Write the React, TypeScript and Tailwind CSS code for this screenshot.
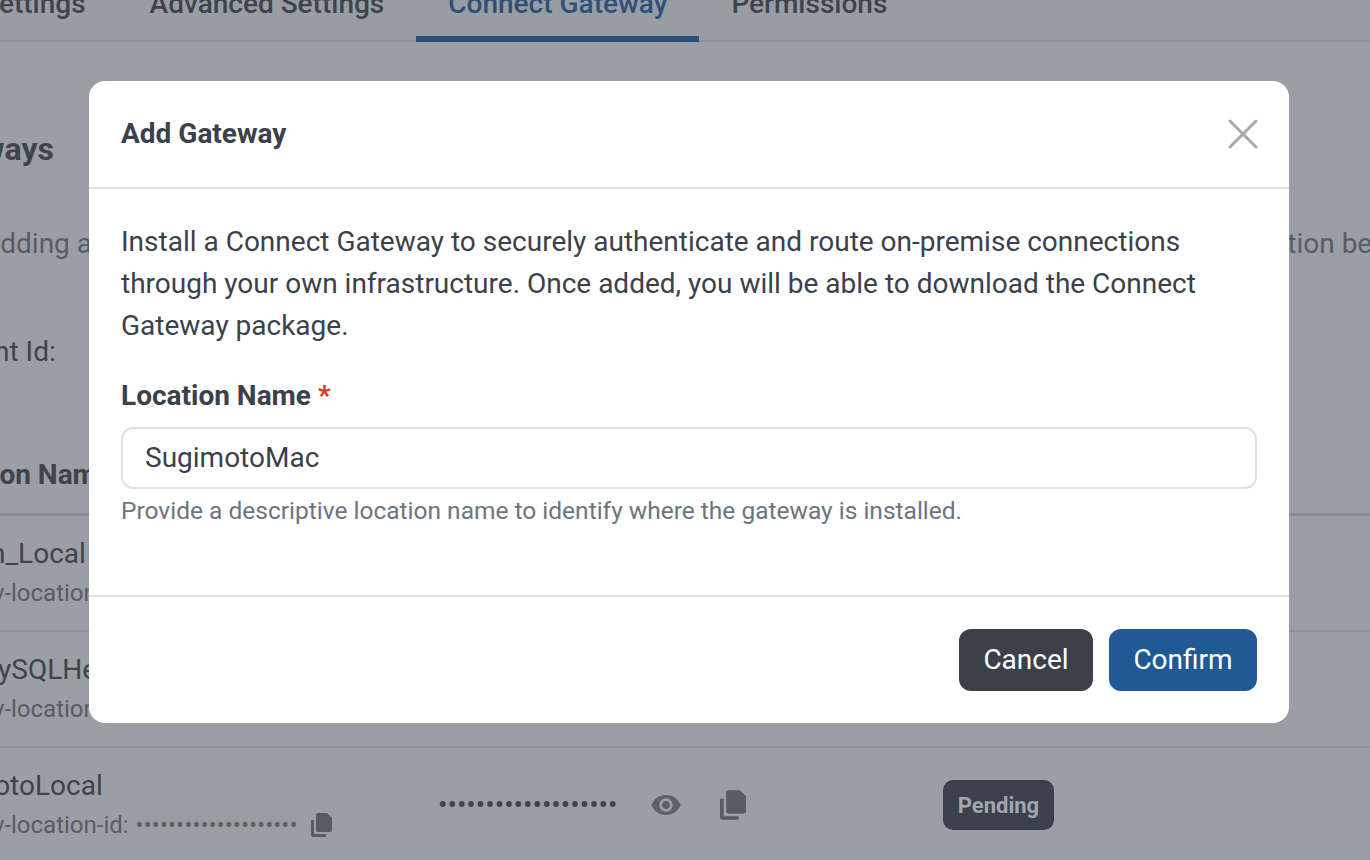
import { MdRemoveRedEye } from 'react-icons/md';

const DOTS = '•'.repeat(19);
const ID_DOTS = '•'.repeat(20);

function CopyIcon({ className }: { className: string }) {
  return (
    <svg className={className} viewBox="0 0 21 24" fill="currentColor">
      <path d="M7 0h9l5 5v12a2 2 0 0 1-2 2H7a2 2 0 0 1-2-2V2a2 2 0 0 1 2-2z" />
      <path d="M0 7h3v14h12v3H2a2 2 0 0 1-2-2z" />
    </svg>
  );
}

function LocationRow({ name, last }: { name: string; last?: boolean }) {
  return (
    <div className={`h-[116px] pt-[20px] ${last ? '' : 'border-b-2 border-[#8d9098]'}`}>
      <div className="flex items-start">
        <div className="w-[524px] shrink-0">
          <div className="ml-[1px] text-[28px] leading-[36px] text-[#3d444e] whitespace-nowrap">{name}</div>
          <div className="ml-[1px] mt-[3px] flex items-center text-[24px] leading-[36px] text-[#565d67] whitespace-nowrap">
            <span>gateway-location-id:</span>
            <span className="ml-[7px] text-[#5a6069]">{ID_DOTS}</span>
            <CopyIcon className="ml-[13px] w-[21px] h-[24px] text-[#585b63]" />
          </div>
        </div>
        {last && (
          <div className="mt-[12px] flex items-center">
            <span className="-mt-[1px] w-[178px] h-[36px] leading-[36px] text-[28px] text-[#3d444e] whitespace-nowrap overflow-hidden">{DOTS}</span>
            <MdRemoveRedEye className="ml-[34px] text-[#5e6169]" size={32} />
            <CopyIcon className="ml-[38px] w-[26px] h-[30px] text-[#585b63]" />
            <span className="ml-[197px] w-[111px] h-[50px] flex items-center justify-center rounded-[10px] bg-[#3a414c] text-[22px] font-bold text-[#a3a6ad]">
              Pending
            </span>
          </div>
        )}
      </div>
    </div>
  );
}

export default function App() {
  return (
    <div
      className="relative w-[1370px] h-[860px] overflow-hidden bg-[#9b9ea5]"
      style={{ fontFamily: 'Roboto, sans-serif' }}
    >
      {/* page behind the dialog */}
      <div className="h-[42px] border-b-2 border-[#8d9098] flex items-end bg-[#989da4]">
        <div className="flex -ml-[50px] text-[28px] font-medium text-[#3d444e]">
          {['Settings', 'Advanced Settings', 'Connect Gateway', 'Permissions'].map(tab => (
            <div
              key={tab}
              className={`h-[42px] -mb-[2px] px-[32px] leading-[8px] whitespace-nowrap ${
                tab === 'Connect Gateway' ? 'border-b-[6px] border-[#2b5078] text-[#2d5178]' : ''
              }`}
            >
              {tab}
            </div>
          ))}
        </div>
      </div>

      <div className="-ml-[86px]">
        <h2 className="mt-[87px] text-[32px] leading-[40px] font-bold text-[#3d444e]">Gateways</h2>
        <p className="mt-[57px] flex justify-between w-[1508px] text-[28px] leading-[36px] text-[#565d67] whitespace-nowrap">
          <span className="ml-[68px]">Adding a</span>
          <span>location before</span>
        </p>
        <div className="mt-[72px] ml-[1px] text-[28px] leading-[36px] text-[#3d444e] whitespace-nowrap">Account Id:</div>

        <div className="mt-[87px] pl-[8px] pb-[20px] border-b-[3px] border-[#858a93] text-[28px] leading-[36px] font-bold text-[#3d444e] whitespace-nowrap">
          Location Name
        </div>
        <LocationRow name="Nathan_Local" />
        <LocationRow name="ProdMySQLHelper" />
        <LocationRow name="SugimotoLocal" last />
      </div>

      {/* dialog */}
      <div className="absolute left-[89px] top-[81px] w-[1200px] h-[642px] flex flex-col rounded-[16px] bg-white text-[#3a414b]">
        <div className="h-[108px] shrink-0 flex items-center justify-between pl-[32px] pr-[31px] border-b-2 border-[#dee2e6]">
          <h3 className="text-[28px] font-bold">Add Gateway</h3>
          <svg width="30" height="30" viewBox="0 0 30 30" fill="none" stroke="#a5a9a9" strokeWidth="3" strokeLinecap="round">
            <path d="M2 2L28 28M28 2L2 28" />
          </svg>
        </div>

        <div className="h-[408px] shrink-0 px-[32px] pt-[32px] border-b-2 border-[#dee2e6]">
          <p className="text-[28px] leading-[42px]">
            Install a Connect Gateway to securely authenticate and route on-premise connections through your own
            infrastructure. Once added, you will be able to download the Connect Gateway package.
          </p>
          <label className="block mt-[28px] text-[28px] leading-[42px] font-bold">
            Location Name <span className="text-[#dc3522]">*</span>
          </label>
          <div className="mt-[10px] h-[62px] flex items-center px-[22px] rounded-[12px] border-2 border-[#dee2e6] text-[28px]">
            SugimotoMac
          </div>
          <div className="mt-[4px] text-[24.5px] leading-[36px] text-[#6c757d]">
            Provide a descriptive location name to identify where the gateway is installed.
          </div>
        </div>

        <div className="flex-1 flex items-center justify-end gap-[16px] pr-[32px]">
          <button className="w-[134px] h-[62px] rounded-[12px] bg-[#3a414b] text-[28px] text-white">Cancel</button>
          <button className="w-[148px] h-[62px] rounded-[12px] bg-[#1f5a94] text-[28px] text-white">Confirm</button>
        </div>
      </div>
    </div>
  );
}
